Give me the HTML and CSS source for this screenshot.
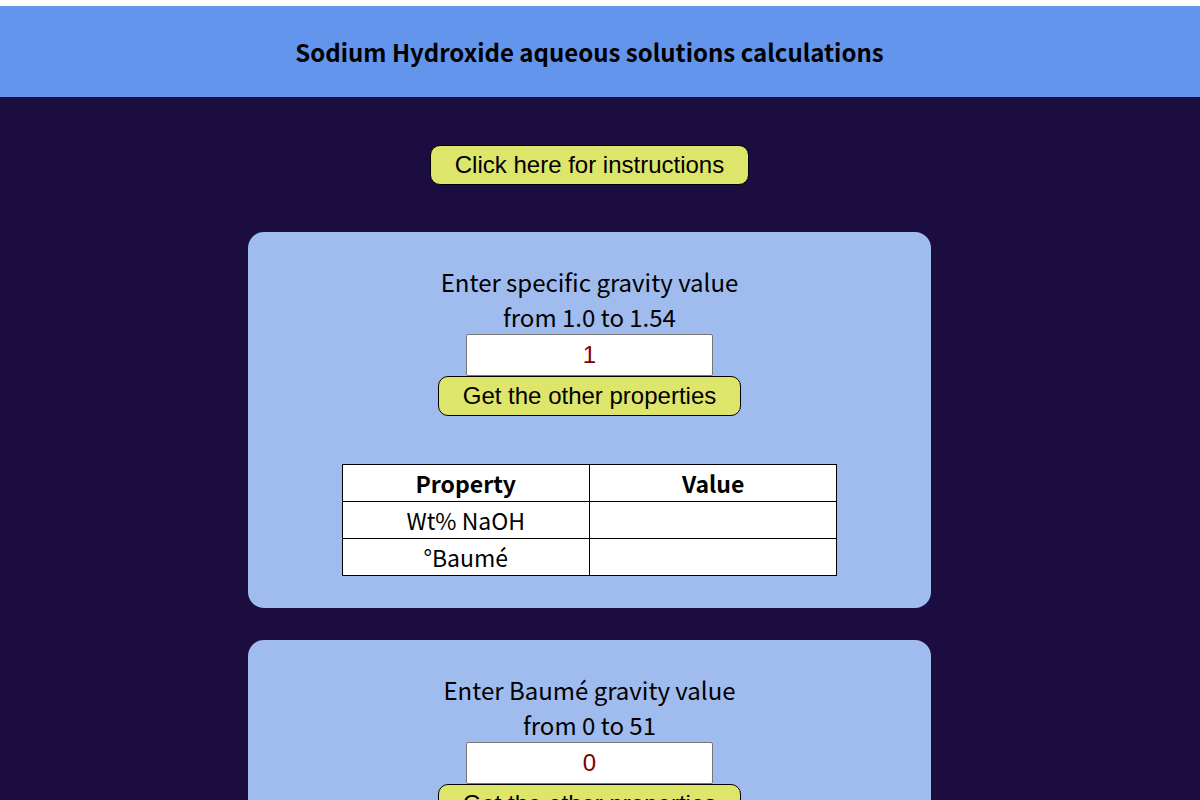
FILE: index.html
```html
<!DOCTYPE html>
<html lang="en">
<head>
<meta charset="utf-8">
<meta name="viewport" content="width=device-width, initial-scale=1">
<title>Sodium Hydroxide aqueous solutions calculations</title>
<link rel="stylesheet" href="styles.css">
</head>
<body>
<header class="header">
  <h1 class="title">Sodium Hydroxide aqueous solutions calculations</h1>
</header>
<main class="main">
  <button class="button" type="button">Click here for instructions</button>
  <div class="cards">
    <section class="card">
      <form class="form">
        <label class="label" for="gravity">Enter specific gravity value<br>from 1.0 to 1.54</label>
        <input class="input" id="gravity" type="text" inputmode="decimal" value="1">
        <button class="button" type="button">Get the other properties</button>
      </form>
      <table class="table">
        <thead><tr><th>Property</th><th>Value</th></tr></thead>
        <tbody>
          <tr><td>Wt% NaOH</td><td></td></tr>
          <tr><td>°Baumé</td><td></td></tr>
        </tbody>
      </table>
    </section>
    <section class="card">
      <form class="form">
        <label class="label" for="baume">Enter Baumé gravity value<br>from 0 to 51</label>
        <input class="input" id="baume" type="text" inputmode="decimal" value="0">
        <button class="button" type="button">Get the other properties</button>
      </form>
    </section>
  </div>
</main>
</body>
</html>
```
FILE: styles.css
```css
* { box-sizing: border-box; }

html { background: #fff; }

body {
  margin: 0;
  padding-top: 6px;
  font-family: "Noto Sans CJK JP", "Noto Sans", sans-serif;
  font-size: 24px;
  line-height: 35px;
  color: #000;
}

.header {
  padding: 28px 21px 28px 0;
  background: #6495ed;
  text-align: center;
}

.title {
  margin: 0;
  font-size: 24px;
  font-weight: 700;
}

.main {
  display: flex;
  flex-direction: column;
  align-items: center;
  gap: 47px;
  padding: 48px 21px 32px 0;
  background: #1b0d40;
}

.button {
  padding: 5px 24px;
  border: 1px solid #000;
  border-radius: 10px;
  background: #dde66a;
  color: #000;
  font-family: "Liberation Sans", Arial, sans-serif;
  font-size: 24px;
  line-height: 28px;
}

.cards {
  display: flex;
  flex-direction: column;
  gap: 32px;
  width: 58%;
}

.card {
  display: flex;
  flex-direction: column;
  align-items: center;
  gap: 48px;
  padding: 32px;
  border-radius: 16px;
  background: #a0bbed;
}

.form {
  display: flex;
  flex-direction: column;
  align-items: center;
}

.label { text-align: center; }

.input {
  width: 247px;
  height: 42px;
  border: 1px solid #767676;
  border-radius: 2px;
  background: #fff;
  color: #800000;
  font-family: "Liberation Sans", Arial, sans-serif;
  font-size: 24px;
  text-align: center;
}

.table {
  width: 80%;
  table-layout: fixed;
  border-collapse: collapse;
  background: #fff;
  font-size: 23px;
}

.table th,
.table td {
  height: 37px;
  padding: 0;
  border: 1px solid #000;
  text-align: center;
}
```
